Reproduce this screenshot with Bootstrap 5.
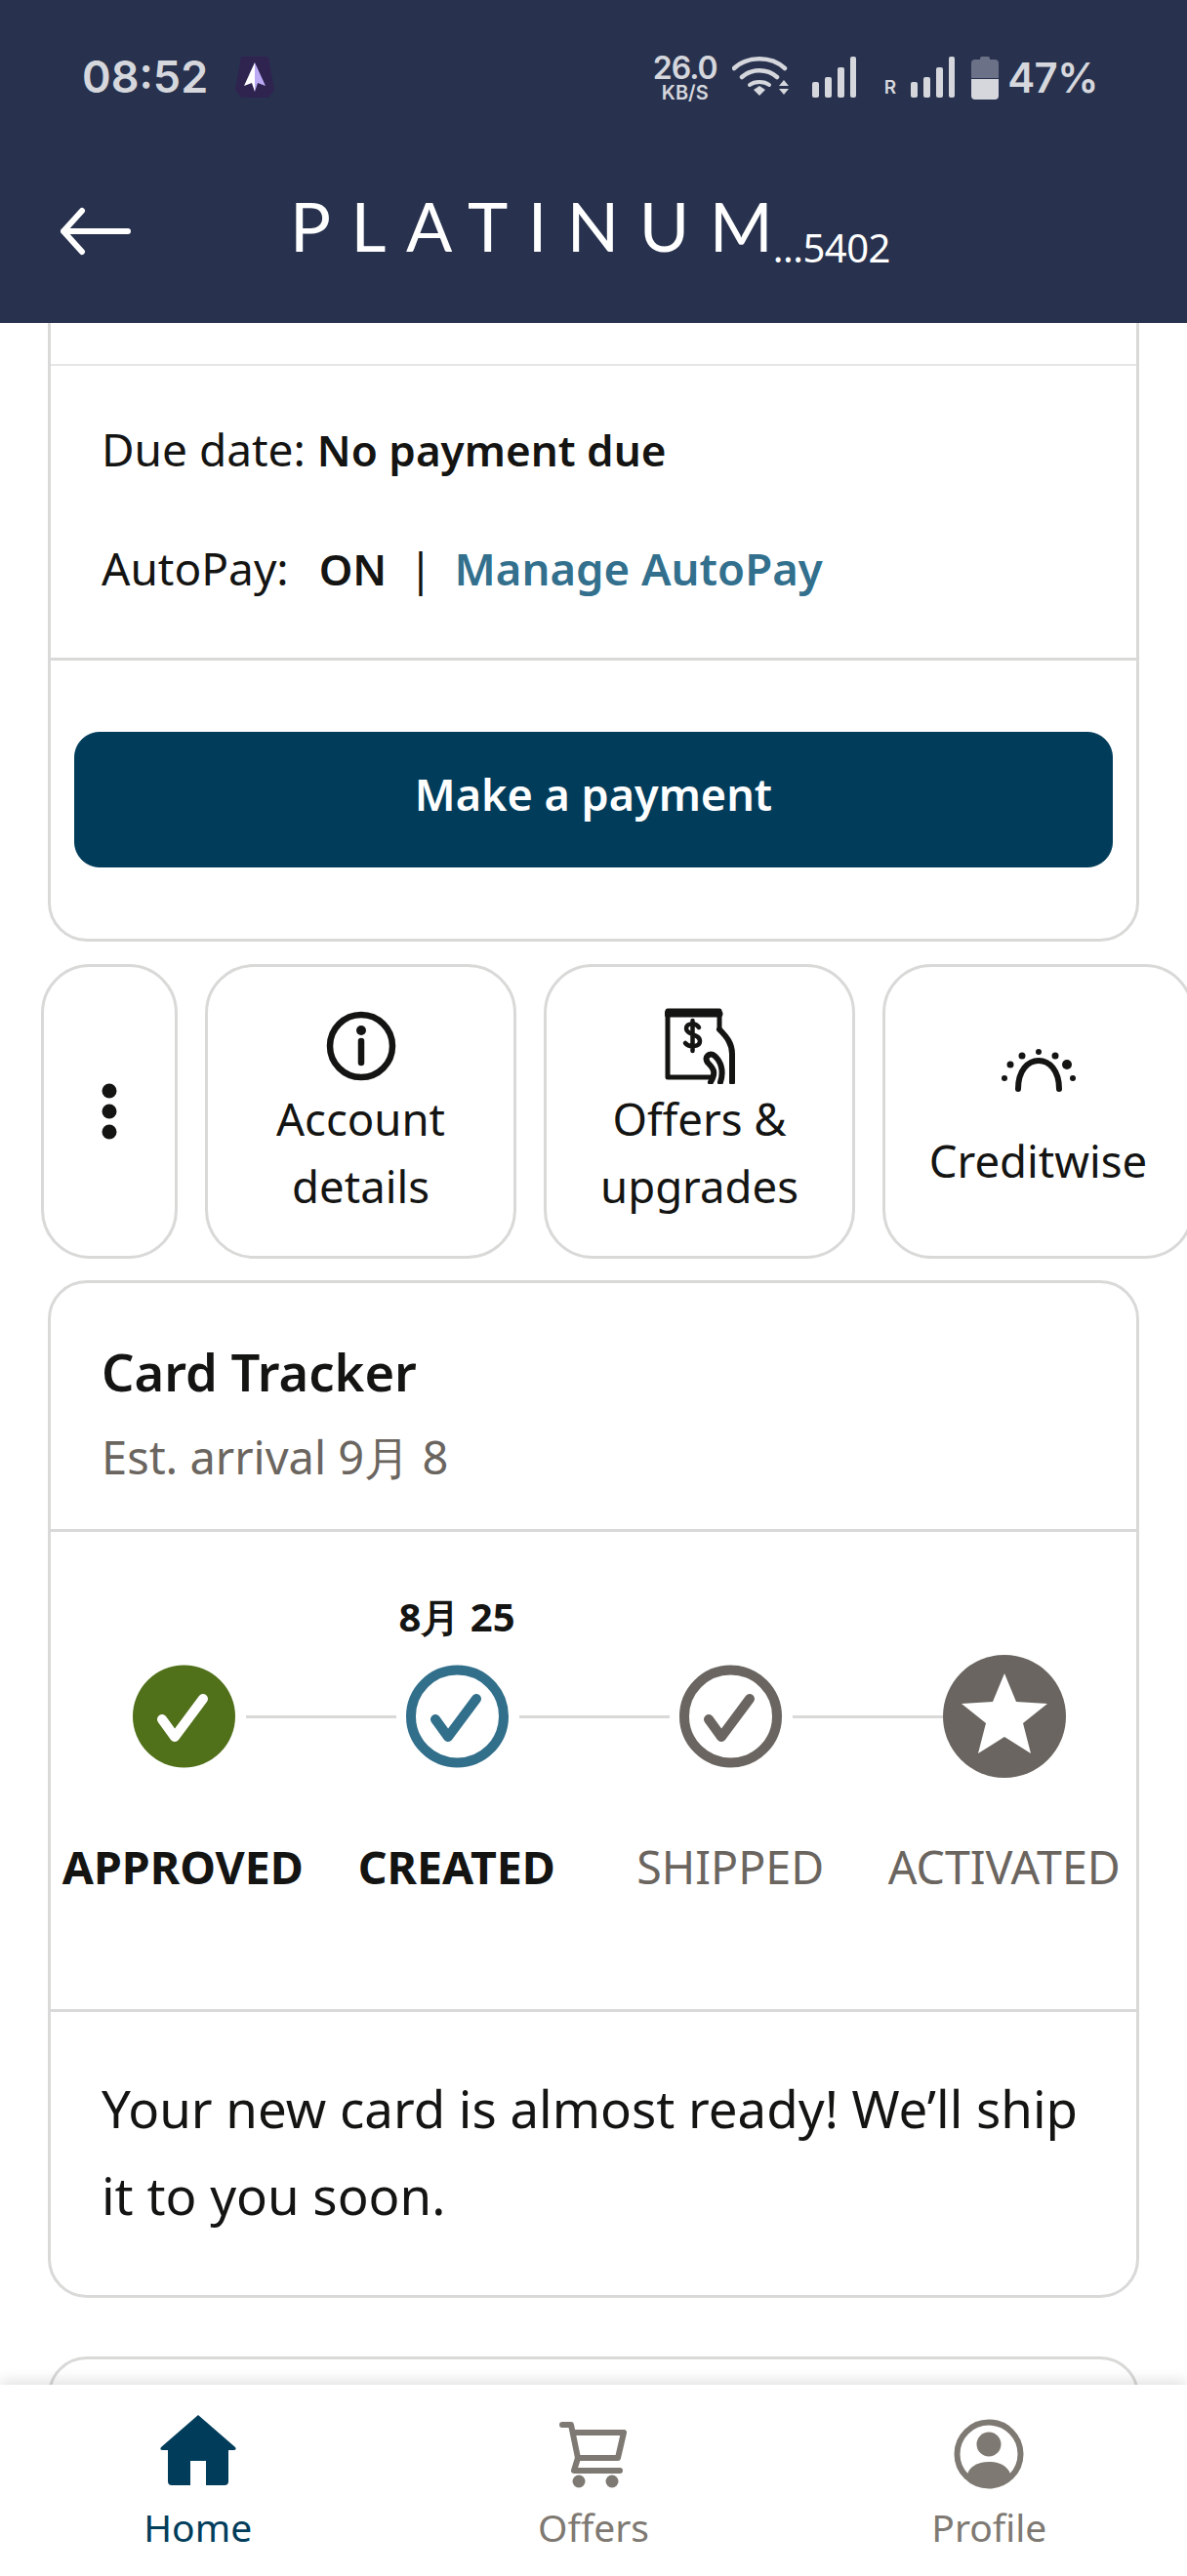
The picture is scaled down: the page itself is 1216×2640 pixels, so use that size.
<!DOCTYPE html>
<html lang="en">
<head>
    <meta charset="UTF-8">
    <meta name="viewport" content="width=device-width, initial-scale=1.0">
    <title>Platinum</title>
    <link href="https://cdn.jsdelivr.net/npm/bootstrap@5.3.0/dist/css/bootstrap.min.css" rel="stylesheet">
    <style>
        body {
    background-color: #fff;
    color: #141413;
    font-family: "Noto Sans", sans-serif;
    font-size: 45px;
    margin: 0;
}

.app-page {
    width: 1216px;
    height: 2640px;
    overflow: hidden;
}

/* header */
.app-head {
    height: 331px;
    background-color: #28324e;
    color: #fff;
    flex: none;
}

.status-row {
    height: 130px;
    padding: 58px 91px 0 84px;
    color: #d5d7dd;
    font-family: "Inter", sans-serif;
    font-weight: 600;
}

.status-time {
    font-size: 45px;
    line-height: 42px;
}

.app-mark { margin-left: 28px; }

.speed-box {
    width: 66px;
    line-height: 1;
    text-align: center;
    margin-right: 15px;
}

.speed-num { font-size: 32px; height: 27px; letter-spacing: -1px; line-height: 24px; }
.speed-unit { font-size: 20px; }

.status-pct {
    font-size: 42px;
    line-height: 44px;
    margin-left: 9px;
    letter-spacing: -.5px;
}

.roam-r {
    font-size: 19px;
    line-height: 20px;
    height: 42px;
    padding-top: 22px;
    margin: 0 15px 0 28px;
}

.title-row {
    height: 201px;
    padding: 0 0 0 62px;
}

.back-arrow { margin-top: 82px; }
.brand-wrap { margin-top: 66px; }

.brand-name {
    font-family: "Lato", sans-serif;
    font-size: 70px;
    line-height: 1;
    letter-spacing: 20.5px;
    margin-left: 163px;
}

.brand-last { letter-spacing: 0; }

.brand-num {
    font-family: "Noto Sans", sans-serif;
    font-size: 40px;
    line-height: 1;
    letter-spacing: -.5px;
    margin-bottom: -8px;
}

/* body */
.app-scroll {
    flex: 1 1 auto;
    min-height: 0;
    overflow: hidden;
}

.info-box {
    margin: 0 49px;
    border: 3px solid #d9d9d7;
    border-radius: 40px;
    background: #fff;
}

.first-box { margin-top: -40px; }

.clip-row { height: 81px; border-bottom: 2px solid #e6e6e4; }

.due-rows { padding: 55px 52px 62px; border-bottom: 3px solid #d9d9d7; }
.due-line { line-height: 60px; height: 60px; white-space: nowrap; font-size: 46px; }
.due-line + .due-line { margin-top: 62px; }
.strong-txt { font-weight: 600; font-size: 44px; }
.on-txt { margin-left: 19px; }
.auto-link { color: #32708d; font-weight: 600; text-decoration: none; font-size: 45.500px; }
.pipe { margin: 0 22px; }

.pay-wrap { padding: 73px 24px 73px; }
.pay-btn {
    height: 139px;
    background-color: #013d5b;
    border-color: #013d5b;
    color: #fff;
    font-size: 45px;
    font-weight: 600;
    border-radius: 26px;
    padding-bottom: 18px;
}

.tile-row {
    padding-left: 42px;
    gap: 28px;
    margin-top: 23px;
    height: 302px;
    width: 1216px;
    overflow: hidden;
}

.tile-box {
    flex: none;
    width: 319px;
    height: 302px;
    border: 3px solid #d9d9d7;
    border-radius: 50px;
    text-align: center;
    line-height: 69px;
    padding-top: 41px;
    font-size: 45.5px;
}

.tile-icon { height: 78px; margin-bottom: 2px; }
.tile-kebab { width: 140px; padding-top: 0; }
.tile-credit { padding-top: 66px; }
.tile-credit .tile-icon { height: 44px; margin-bottom: 54px; }

.track-box { margin-top: 22px; }
.track-head { padding: 61px 52px 44px; border-bottom: 3px solid #d9d9d7; }
.track-title { font-size: 52.5px; font-weight: 600; line-height: 60px; }
.track-sub { color: #6b6560; line-height: 60px; margin-top: 27px; font-size: 47px; }

.track-body { padding: 62px 0 121px; border-bottom: 3px solid #d9d9d7; }
.track-date {
    font-size: 40px;
    font-weight: 700;
    line-height: 50px;
    text-align: center;
    margin-left: 276px;
    width: 280px;
}
.step-row { height: 126px; margin: 14px 0 66px; padding-left: 84px; }
.step-line { width: 154px; height: 3px; margin: 0 10px 0 11px; background-color: #d9d9d7; flex: none; }
.label-row { display: grid; grid-template-columns: repeat(4, 280.5px); margin-left: -5px; }
.step-label { text-align: center; line-height: 50px; font-size: 46.5px; white-space: nowrap; color: #6b6560; }
.step-done { color: #141413; font-weight: 700; }

.track-msg { padding: 54px 40px 58px 52px; font-size: 52.800px; line-height: 89px; }

.next-box { margin-top: 60px; height: 200px; }

/* bottom nav */
.tab-bar {
    flex: none;
    height: 196px;
    background: #fff;
    box-shadow: 0 -4px 14px rgba(0, 0, 0, .12);
    position: relative;
}

.tab-item {
    flex: 1 1 0;
    text-align: center;
    color: #7e7972;
    font-size: 39px;
    line-height: 50px;
    padding-top: 31px;
}

.tab-item.tab-on { color: #013d5b; }
.tab-icon { height: 78px; margin-bottom: 12px; }
.tab-cart { padding-top: 7px; }
.tab-user { padding-top: 4px; }
    </style>
</head>
<body>

<div class="app-page d-flex flex-column">
    <div class="app-head">
        <div class="status-row d-flex align-items-start">
            <div class="status-time">08:52</div>
            <svg class="app-mark" width="40" height="42" viewBox="0 0 40 42">
                <path d="M6 0H34L40 34 34 42H6L0 34Z" fill="#2f2350"/>
                <path d="M20 6 9 30 17 27 20 36Z" fill="#fff"/>
                <path d="M20 6 31 30 23 27 20 36Z" fill="#bcaaf5"/>
            </svg>
            <div class="ms-auto d-flex align-items-start">
                <div class="speed-box">
                    <div class="speed-num">26.0</div>
                    <div class="speed-unit">KB/S</div>
                </div>
                <svg width="58" height="42" viewBox="0 0 58 42" fill="none" stroke="#d5d7dd" stroke-width="4.5" stroke-linecap="round">
                    <path d="M2 12C16-1 40-1 54 12"/>
                    <path d="M10 21C20 12 36 12 46 21"/>
                    <path d="M18 29C23 25 33 25 38 29" stroke-width="4"/>
                    <path d="M22 34 28 30 34 34 28 40Z" fill="#d5d7dd" stroke="none"/>
                    <path d="M48 30 53 24 58 30ZM48 33H58L53 39Z" fill="#d5d7dd" stroke="none"/>
                </svg>
                <svg class="ms-4" width="46" height="42" viewBox="0 0 46 42" fill="#d5d7dd">
                    <rect x="0" y="26" width="7" height="16" rx="2"/><rect x="13" y="21" width="7" height="21" rx="2"/><rect x="26" y="11" width="7" height="31" rx="2"/><rect x="39" y="0" width="6" height="42" rx="2"/>
                </svg>
                <div class="roam-r">R</div>
                <svg width="46" height="42" viewBox="0 0 46 42" fill="#d5d7dd">
                    <rect x="0" y="26" width="7" height="16" rx="2"/><rect x="13" y="21" width="7" height="21" rx="2"/><rect x="26" y="11" width="7" height="31" rx="2"/><rect x="39" y="0" width="6" height="42" rx="2"/>
                </svg>
                <svg class="ms-3" width="28" height="44" viewBox="0 0 28 44">
                    <path d="M4 3H9V2Q9 0 11 0H17Q19 0 19 2V3H24Q28 3 28 7V22H0V7Q0 3 4 3Z" fill="#6b7186"/>
                    <path d="M0 23H28V40Q28 44 24 44H4Q0 44 0 40Z" fill="#d5d7dd"/>
                </svg>
                <div class="status-pct">47%</div>
            </div>
        </div>
        <div class="title-row d-flex align-items-start">
            <svg class="back-arrow" width="72" height="50" viewBox="0 0 72 50" fill="none" stroke="#fff" stroke-width="6" stroke-linecap="round" stroke-linejoin="round">
                <path d="M22 4 3 25 22 46M3 25H69"/>
            </svg>
            <div class="brand-wrap d-flex align-items-end">
                <div class="brand-name">PLATINU<span class="brand-last">M</span></div>
                <div class="brand-num">...5402</div>
            </div>
        </div>
    </div>

    <div class="app-scroll">
        <div class="info-box first-box">
            <div class="clip-row"></div>
            <div class="due-rows">
                <div class="due-line">Due date: <span class="strong-txt">No payment due</span></div>
                <div class="due-line">AutoPay: <span class="strong-txt on-txt">ON</span><span class="pipe">|</span><a href="#" class="auto-link">Manage AutoPay</a></div>
            </div>
            <div class="pay-wrap">
                <button type="button" class="btn pay-btn w-100">Make a payment</button>
            </div>
        </div>

        <div class="tile-row d-flex">
            <div class="tile-box tile-kebab d-flex align-items-center justify-content-center">
                <svg width="16" height="58" viewBox="0 0 16 58" fill="#141413"><circle cx="8" cy="8" r="7.5"/><circle cx="8" cy="29" r="7.5"/><circle cx="8" cy="50" r="7.5"/></svg>
            </div>
            <div class="tile-box">
                <div class="tile-icon">
                    <svg width="72" height="78" viewBox="0 0 72 78" fill="none" stroke="#141413">
                        <circle cx="36" cy="39" r="32" stroke-width="6.5"/>
                        <path d="M36 34V56" stroke-width="6.5" stroke-linecap="round"/>
                        <circle cx="36" cy="23" r="5" fill="#141413" stroke="none"/>
                    </svg>
                </div>
                Account<br>details
            </div>
            <div class="tile-box">
                <div class="tile-icon">
                    <svg width="72" height="78" viewBox="0 0 72 78" fill="none" stroke="#141413" stroke-width="5" stroke-linejoin="round" stroke-linecap="round">
                        <path d="M46 71H3V3H56V22"/>
                        <path d="M3 6H56" stroke-width="7"/>
                        <path d="M35 20C32 15 22 15 22 21 22 28 36 26 36 34 36 40 25 41 21 36M28.500 13V44" stroke-width="4.500"/>
                        <path d="M56 22C64 30 69 37 69 47V76" stroke-width="6"/>
                        <path d="M47 76C53 66 50 62 44 56 40 50 46 45 51 49 57 54 61 64 57 76" stroke-width="6"/>
                    </svg>
                </div>
                Offers &amp;<br>upgrades
            </div>
            <div class="tile-box tile-credit">
                <div class="tile-icon">
                    <svg width="78" height="44" viewBox="0 0 78 44" fill="#141413">
                        <path d="M18 41C18 22 28 12 39 12 50 12 60 22 60 41" fill="none" stroke="#141413" stroke-width="6" stroke-linecap="round"/>
                        <circle cx="39" cy="3" r="3"/><circle cx="22" cy="7" r="3.500"/><circle cx="56" cy="7" r="3.500"/><circle cx="10" cy="16" r="3.500"/><circle cx="68" cy="16" r="5"/><circle cx="4" cy="30" r="3"/><circle cx="74" cy="30" r="3"/>
                    </svg>
                </div>
                Creditwise
            </div>
        </div>

        <div class="info-box track-box">
            <div class="track-head">
                <div class="track-title">Card Tracker</div>
                <div class="track-sub">Est. arrival 9月 8</div>
            </div>
            <div class="track-body">
                <div class="track-date">8月 25</div>
                <div class="step-row d-flex align-items-center">
                    <svg width="105" height="106" viewBox="0 0 105 106">
                        <circle cx="52.500" cy="53" r="52.500" fill="#50701a"/>
                        <path d="M30 56 43 74 72 35" fill="none" stroke="#fff" stroke-width="10" stroke-linecap="round" stroke-linejoin="round"/>
                    </svg>
                    <div class="step-line"></div>
                    <svg width="105" height="106" viewBox="0 0 105 106">
                        <circle cx="52.500" cy="53" r="47.500" fill="none" stroke="#326f8b" stroke-width="10"/>
                        <path d="M30 56 43 74 72 35" fill="none" stroke="#326f8b" stroke-width="10" stroke-linecap="round" stroke-linejoin="round"/>
                    </svg>
                    <div class="step-line"></div>
                    <svg width="105" height="106" viewBox="0 0 105 106">
                        <circle cx="52.500" cy="53" r="47.500" fill="none" stroke="#6a6560" stroke-width="10"/>
                        <path d="M30 56 43 74 72 35" fill="none" stroke="#6a6560" stroke-width="10" stroke-linecap="round" stroke-linejoin="round"/>
                    </svg>
                    <div class="step-line me-0"></div>
                    <svg width="126" height="126" viewBox="0 0 126 126">
                        <circle cx="63" cy="63" r="63" fill="#6a6560"/>
                        <path d="M63 19 75 48 107 50 82 70 90 101 63 84 36 101 44 70 19 50 51 48Z" fill="#fff"/>
                    </svg>
                </div>
                <div class="label-row">
                    <div class="step-label step-done">APPROVED</div>
                    <div class="step-label step-done">CREATED</div>
                    <div class="step-label">SHIPPED</div>
                    <div class="step-label">ACTIVATED</div>
                </div>
            </div>
            <div class="track-msg">Your new card is almost ready! We’ll ship it to you soon.</div>
        </div>

        <div class="info-box next-box"></div>
    </div>

    <div class="tab-bar d-flex">
        <div class="tab-item tab-on">
            <div class="tab-icon">
                <svg width="80" height="72" viewBox="0 0 80 72" fill="#013d5b">
                    <path d="M40 0 78 33Q80 36 76 36H71V68Q71 72 67 72H48V47H32V72H13Q9 72 9 68V36H4Q0 36 2 33Z"/>
                </svg>
            </div>
            Home
        </div>
        <div class="tab-item">
            <div class="tab-icon tab-cart">
                <svg width="70" height="68" viewBox="0 0 70 68" fill="none" stroke="#7e7972" stroke-width="6" stroke-linecap="round" stroke-linejoin="round">
                    <path d="M3 3H12L19 37H60L66 11H14"/>
                    <path d="M19 37 15 50H62"/>
                    <circle cx="20" cy="61" r="6.500" fill="#7e7972" stroke="none"/><circle cx="54" cy="61" r="6.500" fill="#7e7972" stroke="none"/>
                </svg>
            </div>
            Offers
        </div>
        <div class="tab-item">
            <div class="tab-icon tab-user">
                <svg width="72" height="72" viewBox="0 0 72 72">
                    <circle cx="36" cy="36" r="32.500" fill="none" stroke="#7e7972" stroke-width="6"/>
                    <circle cx="36" cy="26" r="12.500" fill="#7e7972"/>
                    <path d="M13 60C15 49 24 44 36 44S57 49 59 60C52 66 44 69 36 69S20 66 13 60Z" fill="#7e7972"/>
                </svg>
            </div>
            Profile
        </div>
    </div>
</div>

<script src="https://cdn.jsdelivr.net/npm/bootstrap@5.3.0/dist/js/bootstrap.bundle.min.js"></script>
</body>
</html>
